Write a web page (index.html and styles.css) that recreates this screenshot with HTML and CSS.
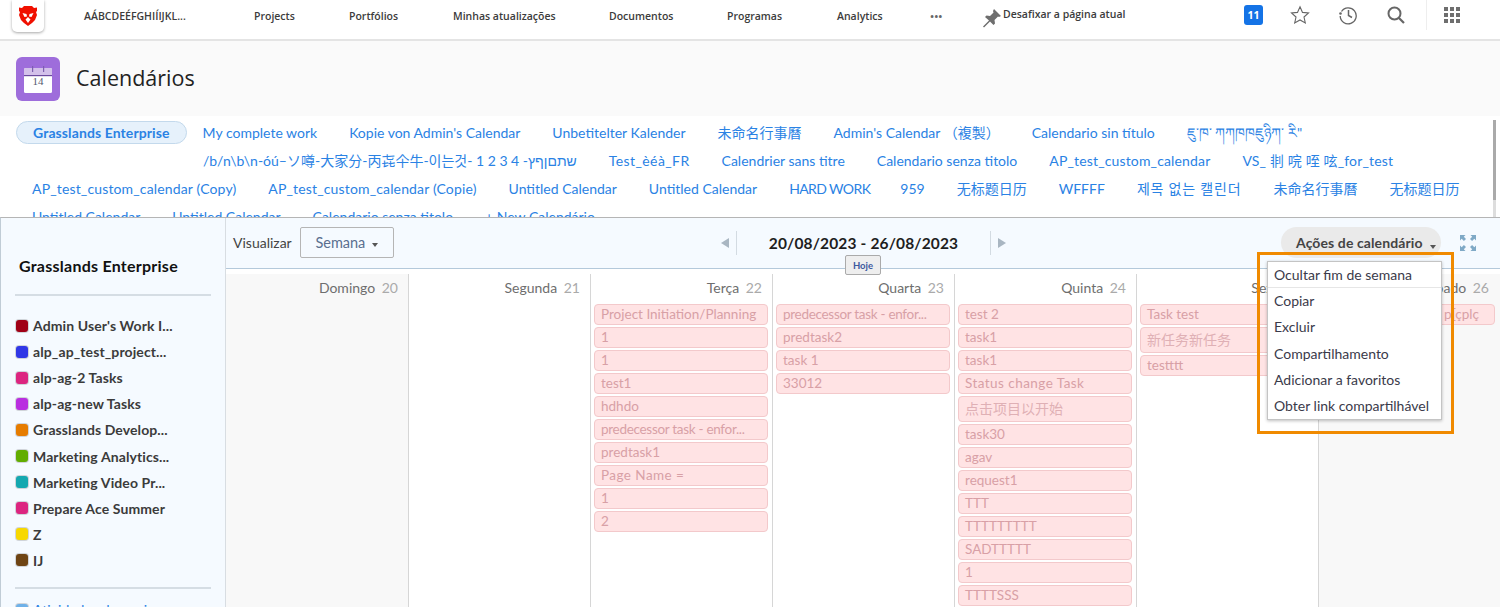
FILE: index.html
```html
<!DOCTYPE html>
<html lang="pt">
<head>
    <meta charset="UTF-8">
    <title>Calendários</title>
    <link rel="stylesheet" href="styles.css">
</head>
<body>
    <header class="topbar">
        <div class="logo">
            <svg width="18" height="20" viewBox="0 0 18 20"><path d="M5 0h8l2 2 3-.5V5l-1 1 1 3-2 5-3 3-4 3-4-3-3-3-2-5 1-3-1-1V1.500L3 2z" fill="#f01000"/><path d="M3.500 7l4 1 .5 2.500L5.500 11zM14.500 7l-4 1-.5 2.500 2.500.5zM9 11l-2.500 2.500L9 17l2.500-3.500z" fill="#fff"/></svg>
        </div>
        <nav class="mainnav">
            <a class="nav-first">AÁBCDEÉFGHIÍIJKL...</a>
            <a class="nav-projects">Projects</a>
            <a class="nav-port">Portfólios</a>
            <a class="nav-upd">Minhas atualizações</a>
            <a class="nav-doc">Documentos</a>
            <a class="nav-prog">Programas</a>
            <a class="nav-ana">Analytics</a>
            <a class="nav-more">•••</a>
            <a class="nav-pin">
                <svg width="20" height="20" viewBox="0 0 20 20"><path d="M12 1l7 7-2 1-1-.5-3.500 3.500.5 3.500-1.500 1.500-3.500-3.500-6 6-1-1 6-6L3 9l1.500-1.500L8 8l3.500-3.500L11 3z" fill="#6e6e6e"/></svg>
                <span>Desafixar a página atual</span>
            </a>
        </nav>
        <div class="tools">
            <span class="badge">11</span>
            <svg class="tool-star" width="20" height="20" viewBox="0 0 20 20"><path d="M10 1.800l2.500 5.600 6 .6-4.500 4 1.300 6L10 15l-5.300 3 1.300-6-4.500-4 6-.6z" fill="none" stroke="#666" stroke-width="1.100"/></svg>
            <svg class="tool-hist" width="20" height="20" viewBox="0 0 20 20"><path d="M3.500 6.500A8 8 0 1 1 2.200 11" fill="none" stroke="#666" stroke-width="1.300"/><path d="M10.500 5v5.500l3.500 2" fill="none" stroke="#666" stroke-width="1.500"/><circle cx="2.500" cy="8.500" r="1.300" fill="#666"/></svg>
            <svg class="tool-search" width="20" height="20" viewBox="0 0 20 20"><circle cx="8.500" cy="8.500" r="6" fill="none" stroke="#666" stroke-width="2"/><path d="M13 13l5 5" stroke="#666" stroke-width="2.200"/></svg>
            <div class="apps">
                <i></i><i></i><i></i><i></i><i></i><i></i><i></i><i></i><i></i>
            </div>
        </div>
    </header>

    <div class="pagehead">
        <div class="pageicon">
            <svg width="28" height="27" viewBox="0 0 28 27">
                <rect x="0" y="2" width="28" height="25" rx="1.500" fill="#fff"/>
                <path d="M1.500 2h25A1.500 1.500 0 0 1 28 3.500V9H0V3.500A1.500 1.500 0 0 1 1.500 2z" fill="#d3c0ea"/>
                <rect x="0" y="9" width="28" height="1.200" fill="#6b4a9e"/>
                <rect x="8" y="0" width="1.200" height="6" fill="#7d5fb0"/>
                <rect x="19" y="0" width="1.200" height="6" fill="#7d5fb0"/>
            </svg>
            <span class="pageicon-day">14</span>
        </div>
        <h1>Calendários</h1>
    </div>

    <div class="tabs">
        <div class="tabrow">
            <a class="tab-active">Grasslands Enterprise</a>
            <a>My complete work</a>
            <a>Kopie von Admin's Calendar</a>
            <a>Unbetitelter Kalender</a>
            <a>未命名行事曆</a>
            <a>Admin's Calendar （複製）</a>
            <a>Calendario sin título</a>
            <a class="tab-tibetan">ཇུ་ཁ་ ཀཀཁཁཇུཉིཀ་ རི"</a>
        </div>
        <div class="tabrow tabrow-indent">
            <a>/b/n\b\n-óú–ソ噂-大家分-丙㐂仐牛-이는것- 1 2 3 4 -שתםןףץ</a>
            <a class="tab-wide">Test_èéà_FR</a>
            <a>Calendrier sans titre</a>
            <a>Calendario senza titolo</a>
            <a class="tab-under">AP_test_custom_calendar</a>
            <a class="tab-under">VS_ 剕 唍 咥 呟_for_test</a>
        </div>
        <div class="tabrow">
            <a class="tab-under">AP_test_custom_calendar (Copy)</a>
            <a class="tab-under">AP_test_custom_calendar (Copie)</a>
            <a>Untitled Calendar</a>
            <a>Untitled Calendar</a>
            <a class="tab-caps">HARD WORK</a>
            <a>959</a>
            <a>无标题日历</a>
            <a>WFFFF</a>
            <a class="tab-ko">제목 없는 캘린더</a>
            <a>未命名行事曆</a>
            <a>无标题日历</a>
        </div>
        <div class="tabrow">
            <a>Untitled Calendar</a>
            <a>Untitled Calendar</a>
            <a>Calendario senza titolo</a>
            <a>+ New Calendário</a>
        </div>
        <div class="tabs-scroll"><i></i></div>
    </div>

    <main class="calendar">
        <aside class="sidebar">
            <h2>Grasslands Enterprise</h2>
            <ul class="legend">
                <li><i class="sw" style="background:#a00016"></i>Admin User's Work I...</li>
                <li><i class="sw" style="background:#2f37e6"></i>alp_ap_test_project...</li>
                <li><i class="sw" style="background:#dc2580"></i>alp-ag-2 Tasks</li>
                <li><i class="sw" style="background:#b92ee0"></i>alp-ag-new Tasks</li>
                <li><i class="sw" style="background:#e67c00"></i>Grasslands Develop...</li>
                <li><i class="sw" style="background:#62ad00"></i>Marketing Analytics...</li>
                <li><i class="sw" style="background:#14a8b0"></i>Marketing Video Pr...</li>
                <li><i class="sw" style="background:#dc2580"></i>Prepare Ace Summer</li>
                <li><i class="sw" style="background:#f7d800"></i>Z</li>
                <li><i class="sw" style="background:#6e4414"></i>IJ</li>
            </ul>
            <ul class="legend legend-more">
                <li class="more"><i class="sw" style="background:#6fb1e8"></i>Atividades da equipe</li>
            </ul>
        </aside>

        <section class="board">
            <div class="toolbar">
                <div class="view">
                    <span class="view-label">Visualizar</span>
                    <button class="view-select">Semana <b class="caret"></b></button>
                </div>
                <div class="range">
                    <span class="arrow arrow-left"></span>
                    <span class="range-text">20/08/2023 - 26/08/2023</span>
                    <span class="arrow arrow-right"></span>
                    <button class="today">Hoje</button>
                </div>
                <div class="actions">
                    <button class="actions-btn">Ações de calendário <b class="caret"></b></button>
                    <svg class="expand" width="16" height="16" viewBox="0 0 16 16"><path d="M0 0h5.500L3.800 1.700 6 3.900 3.900 6 1.700 3.800 0 5.500zM16 0v5.500l-1.700-1.700L12.100 6 10 3.900l2.200-2.200L10.500 0zM16 16h-5.500l1.700-1.700-2.200-2.200 2.100-2.100 2.200 2.200 1.700-1.700zM0 16v-5.500l1.700 1.700L3.900 10 6 12.100l-2.200 2.200L5.500 16z" fill="#7fa9c6"/></svg>
                </div>
            </div>
            <div class="week">
                <div class="day day-off">
                    <div class="day-head">Domingo <span>20</span></div>
                </div>
                <div class="day">
                    <div class="day-head">Segunda <span>21</span></div>
                </div>
                <div class="day">
                    <div class="day-head">Terça <span>22</span></div>
                    <div class="task">Project Initiation/Planning</div>
                    <div class="task">1</div>
                    <div class="task">1</div>
                    <div class="task">test1</div>
                    <div class="task">hdhdo</div>
                    <div class="task task-long">predecessor task - enfor...</div>
                    <div class="task">predtask1</div>
                    <div class="task task-wide">Page Name =</div>
                    <div class="task">1</div>
                    <div class="task">2</div>
                </div>
                <div class="day">
                    <div class="day-head">Quarta <span>23</span></div>
                    <div class="task task-long">predecessor task - enfor...</div>
                    <div class="task">predtask2</div>
                    <div class="task">task 1</div>
                    <div class="task">33012</div>
                </div>
                <div class="day">
                    <div class="day-head">Quinta <span>24</span></div>
                    <div class="task">test 2</div>
                    <div class="task">task1</div>
                    <div class="task">task1</div>
                    <div class="task task-wide">Status change Task</div>
                    <div class="task task-cjk">点击项目以开始</div>
                    <div class="task">task30</div>
                    <div class="task">agav</div>
                    <div class="task">request1</div>
                    <div class="task">TTT</div>
                    <div class="task">TTTTTTTTT</div>
                    <div class="task">SADTTTTT</div>
                    <div class="task">1</div>
                    <div class="task">TTTTSSS</div>
                </div>
                <div class="day">
                    <div class="day-head">Sexta <span>25</span></div>
                    <div class="task">Task test</div>
                    <div class="task task-cjk">新任务新任务</div>
                    <div class="task">testttt</div>
                </div>
                <div class="day day-off day-last">
                    <div class="day-head">Sábado <span>26</span></div>
                    <div class="task task-sat">p[çplç</div>
                </div>
            </div>
        </section>

        <div class="menu-wrap">
            <ul class="menu">
                <li class="menu-first">Ocultar fim de semana</li>
                <li>Copiar</li>
                <li>Excluir</li>
                <li>Compartilhamento</li>
                <li>Adicionar a favoritos</li>
                <li>Obter link compartilhável</li>
            </ul>
        </div>
    </main>
</body>
</html>
```

FILE: styles.css
```css
* {
    box-sizing: border-box;
}
html, body {
    margin: 0;
    height: 607px;
    overflow: hidden;
}
body {
    font-family: "Lato", "Noto Sans CJK SC", "Noto Sans CJK KR", sans-serif;
    font-size: 14px;
    background: #fff;
    color: #333;
}
button {
    font-family: inherit;
}

/* barra superior */
.topbar {
    display: flex;
    align-items: center;
    height: 41px;
    background: #fff;
    border-bottom: 2px solid #e4e4e4;
}
.logo {
    width: 32px;
    height: 32px;
    margin: -7px 0 0 12px;
    display: flex;
    align-items: center;
    justify-content: center;
    border-radius: 0 0 5px 5px;
    background: #fff;
    box-shadow: 0 1px 3px rgba(0,0,0,.35);
}
.mainnav {
    display: flex;
    align-items: center;
    font-family: "Open Sans", sans-serif;
    font-size: 10.500px;
    font-weight: 600;
    color: #3c3c3c;
    margin: 0 0 7px 40px;
    flex: 1;
}
.mainnav a {
    display: block;
    white-space: nowrap;
}
.nav-first { width: 170px; }
.nav-projects { width: 95px; }
.nav-port { width: 104px; }
.nav-upd { width: 156px; }
.nav-doc { width: 118px; }
.nav-prog { width: 110px; }
.nav-ana { width: 93px; }
.nav-more { width: 52px; font-size: 11px; color: #666; }
.mainnav .nav-pin {
    display: flex;
    align-items: flex-start;
}
.nav-pin svg {
    margin-top: 3px;
}
.nav-pin span {
    margin: 2px 0 0 1px;
}
.tools {
    display: flex;
    align-items: center;
    height: 32px;
    margin-bottom: 9px;
}
.badge {
    width: 19px;
    height: 20px;
    border-radius: 3px;
    background: #1473e6;
    color: #fff;
    font-family: "Open Sans", sans-serif;
    font-size: 10.500px;
    font-weight: 700;
    text-align: center;
    line-height: 20px;
}
.tool-star { margin-left: 27px; }
.tool-hist { margin-left: 28px; }
.tool-search { margin-left: 28px; }
.apps {
    display: grid;
    grid-template-columns: repeat(3, 4px);
    grid-gap: 2px;
    margin-left: 20px;
    padding: 7px 40px 7px 17px;
    border-left: 1px solid #eee;
}
.apps i {
    display: block;
    width: 4px;
    height: 4px;
    background: #6e6e6e;
}

/* cabecalho da pagina */
.pagehead {
    display: flex;
    align-items: center;
    height: 75px;
    background: #fafafa;
    padding-left: 16px;
}
.pageicon {
    position: relative;
    width: 44px;
    height: 44px;
    border-radius: 6px;
    background: #9e6ddb;
    display: flex;
    align-items: center;
    justify-content: center;
    padding-top: 1px;
}
.pageicon-day {
    position: absolute;
    left: 0;
    right: 0;
    top: 18px;
    text-align: center;
    font-family: "Liberation Serif", serif;
    font-size: 11px;
    color: #555a70;
}
.pagehead h1 {
    margin: 0 0 2px 16px;
    font-family: "Open Sans", sans-serif;
    font-size: 21.500px;
    font-weight: 400;
    color: #222;
}

/* abas de calendarios */
.tabs {
    position: relative;
    height: 101px;
    padding: 2px 0 0 0;
    overflow: hidden;
    background: #fff;
}
.tabrow {
    display: flex;
    align-items: center;
    height: 28px;
    white-space: nowrap;
    padding-left: 32px;
}
.tabrow:first-child {
    padding-left: 16px;
}
.tabrow a {
    display: block;
    margin-right: 32px;
    color: #2a82e4;
}
.tabrow-indent {
    padding-left: 203px;
}
.tabrow .tab-active {
    height: 23px;
    line-height: 21px;
    margin-right: 16px;
    padding: 0 16px;
    border: 1px solid #c3d9ec;
    border-radius: 12px;
    background: #e6f1fb;
    font-weight: 700;
    letter-spacing: .1px;
}
.tab-tibetan {
    margin-top: 9px;
}
.tab-wide {
    letter-spacing: .4px;
}
.tab-under {
    letter-spacing: .15px;
}
.tabrow .tab-caps {
    letter-spacing: -.6px;
    margin-right: 30px;
}
.tab-ko {
    letter-spacing: .8px;
}
.tabs-scroll {
    position: absolute;
    top: 4px;
    right: 4px;
    bottom: 0;
    width: 3px;
    background: #ddd;
}
.tabs-scroll i {
    display: block;
    height: 80px;
    background: #aaa;
}

/* calendario */
.calendar {
    position: relative;
    display: flex;
    height: 390px;
    border-top: 1px solid #b5b5b5;
    border-left: 1px solid #c0ccd6;
}
.sidebar {
    width: 225px;
    flex: none;
    background: #f5faff;
    border-right: 1px solid #d8dde2;
    padding: 38px 14px 0;
    overflow: hidden;
}
.sidebar h2 {
    margin: 0;
    padding: 0 0 19px 4px;
    font-size: 16px;
    font-weight: 700;
    letter-spacing: .25px;
    color: #111;
    border-bottom: 2px solid #d5dde4;
}
.legend {
    list-style: none;
    margin: 0;
    padding: 16.500px 0 13.500px;
    border-bottom: 2px solid #d5dde4;
}
.legend li {
    display: flex;
    align-items: center;
    height: 26.100px;
    font-size: 14px;
    font-weight: 700;
    letter-spacing: .1px;
    color: #3b3b3b;
    white-space: nowrap;
}
.legend-more {
    border: none;
    padding-top: 8px;
}
.legend .more {
    color: #2a82e4;
    font-weight: 400;
}
.sw {
    width: 12px;
    height: 12px;
    flex: none;
    margin: 0 5px 0 1px;
    border-radius: 3px;
    box-shadow: 0 0 0 1px rgba(0,0,0,.15);
}

.board {
    flex: 1;
    min-width: 0;
}
.toolbar {
    display: flex;
    align-items: center;
    position: relative;
    height: 51px;
    background: #f5faff;
    border-bottom: 1px solid #b4c9db;
    padding-left: 7px;
}
.view {
    display: flex;
    align-items: center;
    width: 488px;
    margin-bottom: 2px;
}
.view-label {
    font-size: 14px;
    color: #444;
}
.view-select {
    width: 94px;
    height: 31px;
    margin-left: 8px;
    background: #f5faff;
    border: 1px solid #b5b5b5;
    border-radius: 2px;
    font-size: 14.500px;
    color: #5a6f8f;
}
.caret {
    display: inline-block;
    border: 3.500px solid transparent;
    border-top: 4px solid #555;
    border-bottom: 0;
    margin-left: 3px;
    vertical-align: 1px;
}
.range {
    display: flex;
    align-items: center;
    position: relative;
}
.range-text {
    width: 255px;
    height: 24px;
    line-height: 24px;
    text-align: center;
    font-size: 15.500px;
    font-weight: 700;
    letter-spacing: .15px;
    color: #1e1e1e;
    border-left: 1px solid #d3dbe2;
    border-right: 1px solid #d3dbe2;
}
.arrow {
    border: 5px solid transparent;
    width: 0;
    height: 0;
}
.arrow-left {
    border-right: 8px solid #a9b6c2;
    border-left: 0;
    margin-right: 7px;
}
.arrow-right {
    border-left: 8px solid #a9b6c2;
    border-right: 0;
    margin-left: 7px;
}
.today {
    position: absolute;
    left: 124px;
    top: 24px;
    width: 36px;
    height: 20px;
    padding: 0;
    background: #eee;
    border: 1px solid #aaa;
    border-radius: 2px;
    font-size: 9.500px;
    font-weight: 700;
    color: #3d5a9e;
}
.actions {
    display: flex;
    align-items: center;
    margin-left: auto;
    padding-right: 24px;
}
.actions-btn {
    width: 160px;
    height: 31px;
    margin-bottom: 2px;
    padding: 0 0 0 15px;
    background: #eaeaea;
    border: none;
    border-radius: 16px;
    font-size: 14px;
    font-weight: 700;
    letter-spacing: .1px;
    color: #444;
    white-space: nowrap;
    text-align: left;
}
.actions-btn .caret {
    vertical-align: -1px;
    margin-left: 4px;
}
.expand {
    margin-left: 19px;
}
.week {
    display: grid;
    grid-template-columns: 183px repeat(5, 182px) 1fr;
    height: 339px;
    padding-top: 5px;
    background: #fff;
}
.day {
    min-width: 0;
    background: #fff;
    border-right: 1px solid #d6d6d6;
    padding: 0 4px 0 3px;
    overflow: hidden;
}
.day-off {
    background: #f8f8f8;
}
.day-last {
    border-right: 0;
    padding-right: 5px;
}
.day-head {
    height: 30px;
    line-height: 28px;
    text-align: right;
    padding-right: 6px;
    font-size: 14px;
    color: #6e6e6e;
}
.day-head span {
    color: #aaa;
    margin-left: 3px;
}
.task {
    height: 21px;
    line-height: 19px;
    margin-bottom: 2px;
    padding-left: 6px;
    background: #ffe3e4;
    border: 1px solid #f3c9cb;
    border-radius: 4px;
    font-size: 13.500px;
    color: #d8a0a6;
    white-space: nowrap;
    overflow: hidden;
}
.task-long {
    letter-spacing: -.3px;
}
.task-wide {
    letter-spacing: .45px;
}
.task-cjk {
    height: 26px;
    line-height: 24px;
    font-size: 14px;
    color: #dfb0b5;
}
.task-sat {
    text-align: right;
    padding-right: 15px;
}

/* menu de acoes */
.menu-wrap {
    position: absolute;
    left: 1256px;
    top: 34px;
    width: 197px;
    height: 182px;
    border: 3px solid #f08a00;
    padding: 6px 0 0 7px;
}
.menu {
    list-style: none;
    margin: 0;
    padding: 0;
    width: 175px;
    background: #fff;
    border: 1px solid #c4c4c4;
    box-shadow: 0 1px 3px rgba(0,0,0,.25);
    font-size: 14px;
    color: #3a3a4a;
}
.menu li {
    height: 26.200px;
    line-height: 26px;
    padding-left: 6px;
    white-space: nowrap;
}
.menu .menu-first {
    border-bottom: 1px solid #e6e6e6;
}
```
